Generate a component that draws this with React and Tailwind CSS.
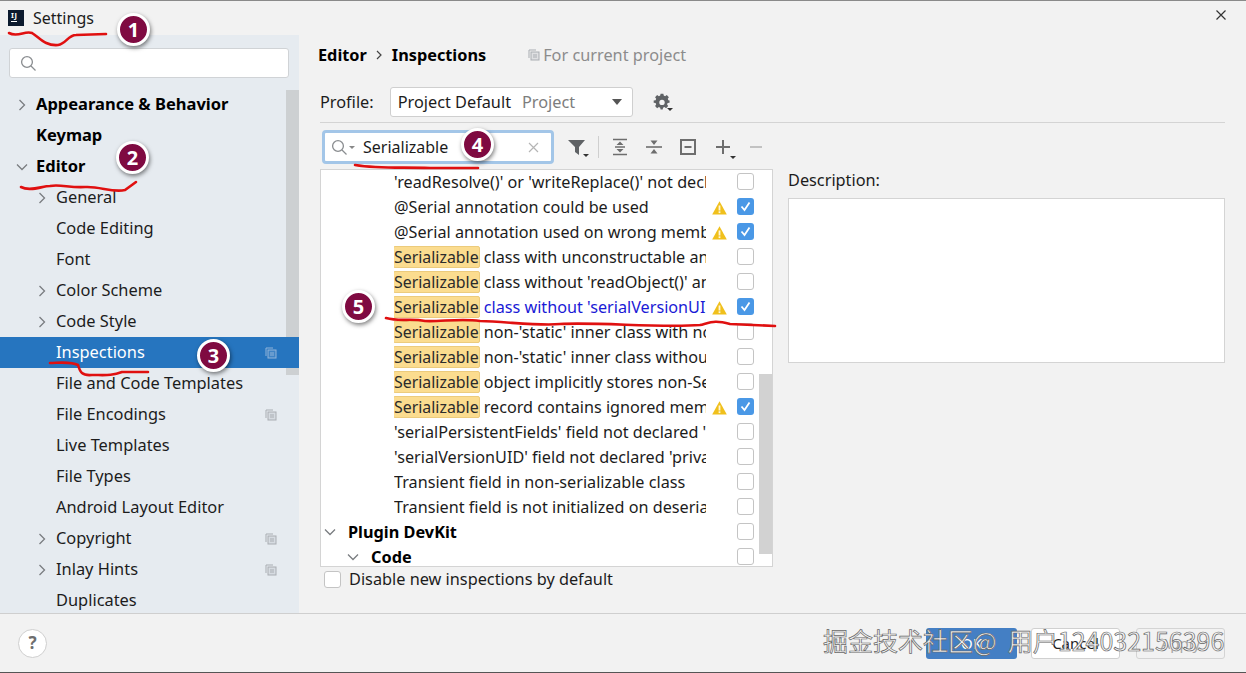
import React from 'react';

const sidebarItems = [
  { label: 'Appearance & Behavior', bold: true, arrow: 'right', level: 0 },
  { label: 'Keymap', bold: true, level: 0 },
  { label: 'Editor', bold: true, arrow: 'down', level: 0 },
  { label: 'General', arrow: 'right', level: 1 },
  { label: 'Code Editing', level: 1 },
  { label: 'Font', level: 1 },
  { label: 'Color Scheme', arrow: 'right', level: 1 },
  { label: 'Code Style', arrow: 'right', level: 1 },
  { label: 'Inspections', level: 1, selected: true, copy: true },
  { label: 'File and Code Templates', level: 1 },
  { label: 'File Encodings', level: 1, copy: true },
  { label: 'Live Templates', level: 1 },
  { label: 'File Types', level: 1 },
  { label: 'Android Layout Editor', level: 1 },
  { label: 'Copyright', arrow: 'right', level: 1, copy: true },
  { label: 'Inlay Hints', arrow: 'right', level: 1, copy: true },
  { label: 'Duplicates', level: 1 },
];

const inspections = [
  { text: "'readResolve()' or 'writeReplace()' not declared" },
  { text: '@Serial annotation could be used', warn: true, checked: true },
  { text: '@Serial annotation used on wrong member', warn: true, checked: true },
  { hl: true, text: 'class with unconstructable ancestor' },
  { hl: true, text: "class without 'readObject()' and" },
  { hl: true, text: "class without 'serialVersionUID'", warn: true, checked: true, blue: true },
  { hl: true, text: "non-'static' inner class with non-" },
  { hl: true, text: "non-'static' inner class without" },
  { hl: true, text: 'object implicitly stores non-Serializable' },
  { hl: true, text: 'record contains ignored members', warn: true, checked: true },
  { text: "'serialPersistentFields' field not declared 'private'" },
  { text: "'serialVersionUID' field not declared 'private'" },
  { text: 'Transient field in non-serializable class' },
  { text: 'Transient field is not initialized on deserialization' },
];

const Chevron = ({ dir = 'right', className = '' }) => (
  <svg width="12" height="12" viewBox="0 0 12 12" fill="none" stroke="#7a7d80" strokeWidth="1.3" className={className}>
    {dir === 'right' ? <path d="M3.5 1 L8.5 6 L3.5 11" /> : <path d="M1 3.5 L6 8.5 L11 3.5" />}
  </svg>
);

const CopyIcon = ({ color = '#a9adb2' }) => (
  <svg width="12" height="12" viewBox="0 0 12 12" fill="none" stroke={color} strokeWidth="1">
    <path d="M1 9 V1 H8" />
    <rect x="3" y="3" width="8" height="8" fill={color} fillOpacity="0.25" />
    <path d="M5 6 H9 M5 8 H9" />
  </svg>
);

const SearchIcon = ({ size = 17 }) => (
  <svg width={size} height={size} viewBox="0 0 17 17" fill="none" stroke="#8a8d90" strokeWidth="1.3">
    <circle cx="7" cy="7" r="5.4" />
    <path d="M11 11 L15.5 15.5" />
  </svg>
);

const Warning = () => (
  <svg width="15" height="14" viewBox="0 0 15 14">
    <path d="M7.5 0.3 L14.8 13.6 H0.2 Z" fill="#f0c01c" />
    <rect x="6.6" y="4.5" width="1.8" height="5" fill="#fff6d8" />
    <rect x="6.6" y="10.3" width="1.8" height="1.8" fill="#fff6d8" />
  </svg>
);

const Check = ({ checked }) =>
  checked ? (
    <span className="flex w-[17px] h-[17px] items-center justify-center rounded-[3px] bg-[#4a98e6]">
      <svg width="13" height="13" viewBox="0 0 13 13" fill="none" stroke="#fff" strokeWidth="1.8">
        <path d="M2.5 6.5 L5.5 10 L10.5 2.5" />
      </svg>
    </span>
  ) : (
    <span className="block w-[17px] h-[17px] rounded-[3px] border border-[#c4c4c4] bg-white" />
  );

const Badge = ({ n, x, y }) => (
  <div
    className="absolute flex w-[33px] h-[33px] items-center justify-center rounded-full border-[3px] border-white bg-[#7f0a41] text-[20px] font-bold text-white shadow-[1px_2px_4px_rgba(0,0,0,0.5)]"
    style={{ left: x, top: y }}
  >
    {n}
  </div>
);

const TreeRow = ({ item }) => (
  <div
    className={`relative flex h-[31px] items-center ${item.selected ? 'z-10 bg-[#2675bf] text-white' : 'text-[#1c1c1c]'} ${
      item.bold ? 'text-[16.5px] font-bold text-black' : 'text-[16.4px]'
    } ${item.level === 0 ? 'pl-[36px]' : 'pl-[56px]'}`}
  >
    {item.arrow && (
      <span className={`absolute top-[10px] ${item.level === 0 ? 'left-[16px]' : 'left-[36px]'}`}>
        <Chevron dir={item.arrow} />
      </span>
    )}
    <span>{item.label}</span>
    {item.copy && (
      <span className="absolute right-[22px] top-[10px]">
        <CopyIcon color={item.selected ? '#8fb4d9' : '#a9adb2'} />
      </span>
    )}
  </div>
);

const InspectionRow = ({ row }) => (
  <div className="flex h-[25px] items-center pl-[73px] text-[16.2px]">
    <div className={`w-[312px] overflow-hidden whitespace-nowrap ${row.blue ? 'text-[#1a1ad6]' : 'text-[#1c1c1c]'}`}>
      {row.hl && (
        <span className="-ml-px mr-[4px] inline-block rounded-[2px] border border-[#eccb7c] bg-[#fbdc8f] text-[15.9px] leading-[20px] text-[#2b2b2b]">
          Serializable
        </span>
      )}
      {row.text}
    </div>
    <div className="flex w-[26px] justify-center">{row.warn && <Warning />}</div>
    <div className="ml-[5px] -mt-[2px]">
      <Check checked={row.checked} />
    </div>
  </div>
);

const ToolIcon = ({ children, w = 20 }) => (
  <svg width={w} height="20" viewBox="0 0 20 20" fill="none" stroke="#6e6e6e" strokeWidth="1.6">
    {children}
  </svg>
);

const App = () => {
  return (
    <div
      className="relative flex h-[673px] w-[1246px] flex-col overflow-hidden border-t border-[#8a8a8a] bg-[#f2f2f2] text-[16.3px] text-[#1c1c1c]"
      style={{ fontFamily: '"Noto Sans", "Open Sans", sans-serif' }}
    >
      {/* title bar */}
      <div className="flex h-[34px] shrink-0 items-center pl-[8px] pr-[19px]">
        <div className="flex h-[16px] w-[16px] flex-col bg-[#0c1a2e] pl-[3px] pt-[1px] text-[7.5px] font-bold leading-[9px] tracking-[0.5px] text-white">
          <span>IJ</span>
          <span className="mt-[1px] block h-[1px] w-[6px] bg-white" />
        </div>
        <span className="ml-[9px] text-[16px]">Settings</span>
        <svg width="12" height="12" viewBox="0 0 12 12" stroke="#333" strokeWidth="1.2" className="ml-auto -mt-[6px]">
          <path d="M1.5 1.5 L10.5 10.5 M10.5 1.5 L1.5 10.5" />
        </svg>
      </div>

      {/* body */}
      <div className="flex min-h-0 flex-1 border-b border-[#cfcfcf]">
        <aside className="relative flex w-[299px] shrink-0 flex-col overflow-hidden bg-[#e6ebf0]">
          <div className="ml-[9px] mr-[10px] mt-[13px] flex h-[30px] shrink-0 items-center rounded-[3px] border border-[#d0d3d6] bg-white pl-[10px]">
            <SearchIcon />
          </div>
          <div className="mt-[11px]">
            {sidebarItems.map((item) => (
              <TreeRow key={item.label} item={item} />
            ))}
          </div>
          <div className="absolute right-0 top-[55px] h-[285px] w-[13px] bg-[#cdd0d2]" />
        </aside>

        <main className="flex min-w-0 flex-1 flex-col pl-[19px] pr-[21px]">
          <div className="mt-[6px] flex h-[28px] items-center">
            <span className="font-bold text-black">Editor</span>
            <svg width="8" height="10" viewBox="0 0 8 10" fill="none" stroke="#444" strokeWidth="1.2" className="ml-[8px] mr-[9px]">
              <path d="M2 1 L6 5 L2 9" />
            </svg>
            <span className="font-bold text-black">Inspections</span>
            <span className="ml-[42px]"><CopyIcon /></span>
            <span className="ml-[3px] text-[#8c8c8c]">For current project</span>
          </div>

          <div className="mt-[18px] flex h-[30px] items-center pl-[2px]">
            <span>Profile:</span>
            <div className="ml-[16px] flex h-[30px] w-[243px] items-center rounded-[3px] border border-[#cfcfcf] bg-white pl-[7px] pr-[10px]">
              <span>Project Default</span>
              <span className="ml-[11px] text-[#7d7d7d]">Project</span>
              <span className="ml-auto h-0 w-0 border-x-[5.5px] border-t-[6px] border-x-transparent border-t-[#555]" />
            </div>
            <span className="relative ml-[20px]">
              <svg width="18" height="18" viewBox="0 0 24 24" fill="#5f6265" className="block">
                <path d="M10 2h4l.6 2.8 1.9.8L19 4l3 3-1.6 2.5.8 1.9L23 12v3l-2.8.6-.8 1.9L21 20l-3 3-2.5-1.6-1.9.8L13 25h-3l-.6-2.8-1.9-.8L5 23l-3-3 1.6-2.5-.8-1.9L0 15v-3l2.8-.6.8-1.9L2 7l3-3 2.5 1.6 1.9-.8z" transform="scale(.92) translate(1 -1)" />
                <circle cx="12" cy="12.5" r="3.6" fill="#f2f2f2" />
              </svg>
              <span className="absolute -right-[2px] bottom-[0px] h-0 w-0 border-x-[3px] border-t-[3px] border-x-transparent border-t-[#333]" />
            </span>
          </div>
          <div className="mt-[5px] ml-[2px] h-px bg-[#d4d4d4]" />

          <div className="mt-[7px] flex h-[34px] items-center pl-[4px]">
            <div className="flex h-[34px] w-[232px] items-center rounded-[4px] border-[3px] border-[#a3c6e8] bg-white pl-[6px] pr-[12px]">
              <SearchIcon size={17} />
              <span className="ml-px h-0 w-0 border-x-[3px] border-t-[3px] border-x-transparent border-t-[#888]" />
              <span className="ml-[8px] text-[16px]">Serializable</span>
              <svg width="11" height="11" viewBox="0 0 11 11" stroke="#b5b5b5" strokeWidth="1.2" className="ml-auto">
                <path d="M1 1 L10 10 M10 1 L1 10" />
              </svg>
            </div>
            <span className="relative ml-[13px] flex">
              <svg width="20" height="20" viewBox="0 0 20 20" fill="#5f6265">
                <path d="M1 3 H18 L12 10 V18 L8 15 V10 Z" />
              </svg>
              <span className="absolute -right-[2px] bottom-0 h-0 w-0 border-x-[3.5px] border-t-[3.5px] border-x-transparent border-t-[#333]" />
            </span>
            <span className="ml-[11px] h-[22px] w-px bg-[#cfcfcf]" />
            <span className="ml-[11px] flex">
              <ToolIcon><path d="M3 2.5 H17 M3 17.5 H17 M5 10 H15" /><path d="M10 4.5 L13.5 8 H6.5 Z M10 15.5 L13.5 12 H6.5 Z" fill="#6e6e6e" stroke="none" /></ToolIcon>
            </span>
            <span className="ml-[14px] flex">
              <ToolIcon><path d="M2 10 H18" /><path d="M10 8 L13.5 3.5 H6.5 Z M10 12 L13.5 16.5 H6.5 Z" fill="#6e6e6e" stroke="none" /></ToolIcon>
            </span>
            <span className="ml-[14px] flex">
              <ToolIcon><rect x="3" y="3" width="14" height="14" strokeWidth="2" /><path d="M6.5 10 H13.5" strokeWidth="2" /></ToolIcon>
            </span>
            <span className="relative ml-[15px] flex">
              <ToolIcon><path d="M10 3 V17 M3 10 H17" strokeWidth="2" /></ToolIcon>
              <span className="absolute -right-[3px] bottom-[-2px] h-0 w-0 border-x-[3.5px] border-t-[3.5px] border-x-transparent border-t-[#333]" />
            </span>
            <span className="ml-[15px] flex">
              <svg width="16" height="20" viewBox="0 0 16 20" stroke="#c2c2c2" strokeWidth="2"><path d="M2 10 H14" /></svg>
            </span>
          </div>

          <div className="ml-[2px] mt-[5px] flex min-h-0">
            <div className="flex flex-col">
              <div className="relative h-[398px] w-[453px] overflow-hidden border border-[#d4d4d4] bg-white">
                {inspections.map((row) => (
                  <InspectionRow key={row.text} row={row} />
                ))}
                <div className="relative flex h-[25px] items-center pl-[27px] font-bold text-black">
                  <span className="absolute left-[3px] top-[6px]"><Chevron dir="down" /></span>
                  Plugin DevKit
                  <span className="absolute left-[416px] top-[3px]"><Check /></span>
                </div>
                <div className="relative flex h-[25px] items-center pl-[50px] font-bold text-black">
                  <span className="absolute left-[26px] top-[6px]"><Chevron dir="down" /></span>
                  Code
                  <span className="absolute left-[416px] top-[3px]"><Check /></span>
                </div>
                <div className="absolute right-0 top-[204px] h-[180px] w-[13px] bg-[#d2d2d2]" />
              </div>
              <label className="flex h-[24px] items-center pl-[4px]">
                <Check />
                <span className="ml-[8px]">Disable new inspections by default</span>
              </label>
            </div>

            <div className="ml-[15px] flex min-w-0 flex-1 flex-col">
              <div className="h-[29px] leading-[22px]">Description:</div>
              <div className="h-[165px] border border-[#d4d4d4] bg-white" />
            </div>
          </div>
        </main>
      </div>

      {/* footer */}
      <div className="flex h-[58px] shrink-0 items-center pl-[18px] pr-[21px]">
        <div className="flex h-[29px] w-[29px] items-center justify-center rounded-full border border-[#cfcfcf] bg-white text-[17px] font-bold text-[#6e6e6e]">
          ?
        </div>
        <div className="ml-auto flex gap-[14px]">
          <button className="h-[31px] w-[91px] rounded-[3px] bg-[#447fc4] text-[15px] text-white">OK</button>
          <button className="h-[31px] w-[89px] rounded-[3px] border border-[#d0d0d0] bg-white text-[15px]">Cancel</button>
          <button className="ml-[2px] h-[31px] w-[89px] rounded-[3px] border border-[#d4d4d4] text-[15px] text-[#a8a8a8]">Apply</button>
        </div>
      </div>
      <div className="h-px shrink-0 bg-[#555]" />

      {/* annotations drawn on top of the screenshot */}
      <svg className="pointer-events-none absolute left-0 top-[-1px] z-20" width="1246" height="673" fill="none" stroke="#e01010" strokeWidth="2.6" strokeLinecap="round">
        <path d="M9 33 C18 38 25 30 32 33 C40 38 45 46 58 45 C66 44 68 35 76 35 L106 34" />
        <path d="M21 187 C30 192 42 186 50 186 C60 184 70 188 85 187 C100 186 112 193 125 190 L136 182" />
        <path d="M50 363 C58 363 70 361 78 365 C80 372 82 376 92 375 C105 375 112 376 122 372 L148 372" />
        <path d="M355 165 C380 169 400 167 430 168 L478 168" />
        <path d="M386 318 C400 322 410 318 425 321 C440 322 460 318 480 321 C510 322 540 326 560 324 C600 322 660 328 700 325 C712 322 715 320 730 324 L775 326" />
      </svg>
      <div className="absolute inset-0 z-30">
        <Badge n="1" x={117} y={12} />
        <Badge n="2" x={116} y={140} />
        <Badge n="3" x={197} y={338} />
        <Badge n="4" x={461} y={127} />
        <Badge n="5" x={342} y={289} />
        <div
          className="absolute left-[823px] top-[624px] whitespace-pre text-[25px] leading-[30px] text-[#f4f4f4] [-webkit-text-stroke:0.7px_#666]"
          style={{ fontFamily: '"Noto Sans CJK SC", "Noto Sans", sans-serif' }}
        >
          掘金技术社区@  用户124032156396
        </div>
      </div>
    </div>
  );
};

export default App;
